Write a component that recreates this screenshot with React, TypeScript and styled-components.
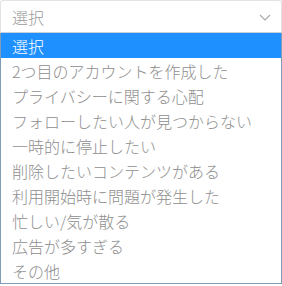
import styled, { createGlobalStyle } from 'styled-components'

const Global = createGlobalStyle`
  html, body {
    margin: 0;
    padding: 0;
    background: #ffffff;
  }
  body {
    font-family: "Noto Sans CJK JP", "Noto Sans", sans-serif;
  }
`

const Wrap = styled.div`
  width: 282px;
  height: 286px;
  display: flex;
  flex-direction: column;
`

const SelectBox = styled.div`
  height: 33px;
  box-sizing: border-box;
  display: flex;
  align-items: center;
  justify-content: space-between;
  padding: 0 10px 0 11px;
  border: 1px solid #e3e3e3;
  border-bottom-color: #c9d0da;
  border-radius: 3px 3px 0 0;
  color: #9a9a9a;
  font-size: 16px;
  font-weight: 300;
  line-height: 1;
`

const Chevron = styled.svg`
  width: 12px;
  height: 7px;
  margin-top: 2px;
`

const List = styled.ul`
  list-style: none;
  margin: 0;
  padding: 0;
  border: 1px solid #7f9db9;
  border-top: none;
  display: flex;
  flex-direction: column;
`

const Option = styled.li<{ $active?: boolean }>`
  height: 25px;
  display: flex;
  align-items: center;
  padding-left: 11px;
  font-size: 16px;
  font-weight: 300;
  line-height: 1;
  color: ${(p) => (p.$active ? '#ffffff' : '#8e8e8e')};
  background: ${(p) => (p.$active ? '#1e90ff' : 'transparent')};
  white-space: nowrap;
`

const options = [
  '選択',
  '2つ目のアカウントを作成した',
  'プライバシーに関する心配',
  'フォローしたい人が見つからない',
  '一時的に停止したい',
  '削除したいコンテンツがある',
  '利用開始時に問題が発生した',
  '忙しい/気が散る',
  '広告が多すぎる',
  'その他',
]

export default function App() {
  return (
    <Wrap>
      <Global />
      <SelectBox>
        <span>選択</span>
        <Chevron viewBox="0 0 12 7">
          <path d="M1 1 L6 6 L11 1" fill="none" stroke="#a8a8a8" strokeWidth="1.1" />
        </Chevron>
      </SelectBox>
      <List>
        {options.map((o, i) => (
          <Option key={o} $active={i === 0}>
            {o}
          </Option>
        ))}
      </List>
    </Wrap>
  )
}
